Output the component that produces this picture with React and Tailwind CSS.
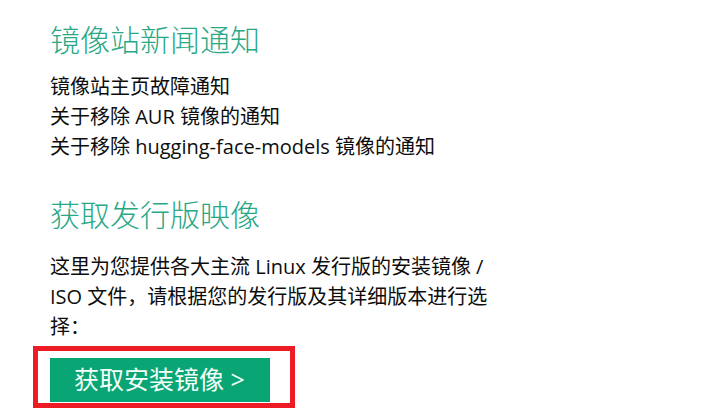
const cjk = "font-['Open_Sans','Noto_Sans_CJK_SC',sans-serif]";

const NEWS = [
  "镜像站主页故障通知",
  "关于移除 AUR 镜像的通知",
  "关于移除 hugging-face-models 镜像的通知",
];

export default function App() {
  return (
    <div className={`min-h-[417px] w-[706px] bg-white pl-[50px] pt-5 ${cjk}`}>
      <h2 className="text-[30px] leading-[40px] font-light text-[#28a885]">镜像站新闻通知</h2>
      <ul className="mt-3 text-[20px] leading-[30px] text-[#0d0d0d]">
        {NEWS.map((n) => (
          <li key={n}>{n}</li>
        ))}
      </ul>

      <h2 className="mt-[33px] text-[30px] leading-[40px] font-light text-[#28a885]">获取发行版映像</h2>
      <p className="mt-[17px] w-[445px] text-[20px] leading-[30px] text-[#0d0d0d]">
        这里为您提供各大主流 Linux 发行版的安装镜像 / ISO 文件，请根据您的发行版及其详细版本进行选择：
      </p>

      <div className="-ml-[17px] mt-1 inline-block border-[5px] border-[#ed1c24] pl-3 pr-5 pt-[7px] pb-px">
        <button className="flex h-[44px] w-[220px] items-center bg-[#0aa574] pl-6 text-[25px] text-[#f4fff9]">
          获取安装镜像 &gt;
        </button>
      </div>
    </div>
  );
}
